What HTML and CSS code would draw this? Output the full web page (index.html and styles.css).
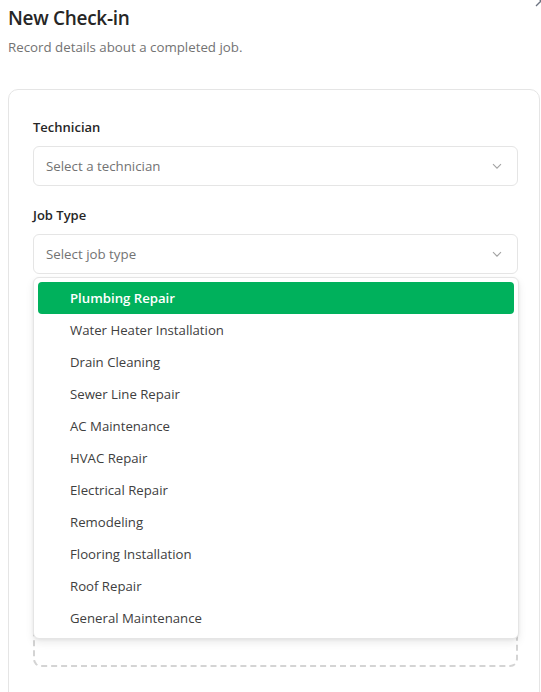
FILE: index.html
```html
<!DOCTYPE html>
<html>
<head>
<meta charset="utf-8">
<link rel="stylesheet" href="styles.css">
</head>
<body>
<div class="dialog">
  <button class="close" aria-label="Close">
    <svg width="12" height="12" viewBox="0 0 12 12"><path d="M1 1L11 11M11 1L1 11" stroke="#6b7280" stroke-width="1.3" fill="none"/></svg>
  </button>
  <header class="head">
    <h1 class="title">New Check-in</h1>
    <p class="subtitle">Record details about a completed job.</p>
  </header>
  <form class="card">
    <div class="field">
      <label class="label">Technician</label>
      <div class="select">
        <span class="placeholder">Select a technician</span>
        <svg class="chev" width="12" height="12" viewBox="0 0 12 12"><path d="M2 4.2L6 8.2L10 4.2" stroke="#a3a3a3" stroke-width="1.1" fill="none"/></svg>
      </div>
    </div>
    <div class="field">
      <label class="label">Job Type</label>
      <div class="select-wrap">
        <div class="select">
          <span class="placeholder">Select job type</span>
          <svg class="chev" width="12" height="12" viewBox="0 0 12 12"><path d="M2 4.2L6 8.2L10 4.2" stroke="#a3a3a3" stroke-width="1.1" fill="none"/></svg>
        </div>
        <ul class="menu">
          <li class="item active">Plumbing Repair</li>
          <li class="item">Water Heater Installation</li>
          <li class="item">Drain Cleaning</li>
          <li class="item">Sewer Line Repair</li>
          <li class="item">AC Maintenance</li>
          <li class="item">HVAC Repair</li>
          <li class="item">Electrical Repair</li>
          <li class="item">Remodeling</li>
          <li class="item">Flooring Installation</li>
          <li class="item">Roof Repair</li>
          <li class="item">General Maintenance</li>
        </ul>
      </div>
    </div>
    <div class="field">
      <div class="select"></div>
    </div>
    <div class="field">
      <div class="textarea"></div>
    </div>
    <div class="field">
      <div class="upload">
        <span class="upload-sub">PNG, JPG, up to 10MB</span>
      </div>
    </div>
  </form>
</div>
</body>
</html>
```
FILE: styles.css
```css
* { box-sizing: border-box; }
html, body { margin: 0; padding: 0; background: #fff; }
body {
  font-family: "Open Sans", "Noto Sans", sans-serif;
  color: #262626;
  width: 541px;
  height: 692px;
  overflow: hidden;
}
.dialog { position: relative; padding: 4px 1px 0 8px; height: 692px; overflow: hidden; }
.close {
  position: absolute; top: -5px; right: -6px;
  border: 0; background: none; padding: 0; width: 12px; height: 12px;
}
.close svg { display: block; }
.head { height: 85px; }
.title {
  margin: 0; font-size: 19px; line-height: 28px; font-weight: 600; color: #262626;
  letter-spacing: -0.3px;
}
.subtitle {
  margin: 6px 0 0; font-size: 13.3px; line-height: 18px; color: #737373;
}
.card {
  border: 1px solid #e5e5e5; border-radius: 10px;
  padding: 27px 21px 0 24px;
  display: flex; flex-direction: column; gap: 19px;
  height: 640px;
}
.field { display: flex; flex-direction: column; gap: 9px; flex-shrink: 0; }
.label { font-size: 13px; line-height: 20px; font-weight: 600; color: #262626; }
.select {
  height: 40px; border: 1px solid #e5e5e5; border-radius: 6px;
  display: flex; align-items: center; justify-content: space-between;
  padding: 0 14px 0 12px;
}
.placeholder { font-size: 13.3px; color: #737373; }
.chev { display: block; }
.select-wrap { position: relative; }
.menu {
  position: absolute; left: 0; right: -1px; top: calc(100% + 3px);
  margin: 0; padding: 4px; list-style: none; background: #fff;
  border: 1px solid #e5e5e5; border-radius: 6px;
  box-shadow: 0 4px 8px rgba(0,0,0,0.08), 0 1px 3px rgba(0,0,0,0.06);
  z-index: 10;
}
.item {
  height: 32px; line-height: 32px; padding-left: 32px;
  font-size: 13.2px; color: #404040; border-radius: 4px;
}
.item.active { background: #00b15c; color: #fff; font-weight: 600; }
.textarea { height: 138px; border: 1px solid #e5e5e5; border-radius: 6px; }
.upload {
  height: 158px; border: 2px dashed #d4d4d4; border-radius: 8px;
  display: flex; flex-direction: column; align-items: center; justify-content: flex-end;
  padding-bottom: 26px;
  font-size: 12px; line-height: 16px; color: #737373;
}
```
